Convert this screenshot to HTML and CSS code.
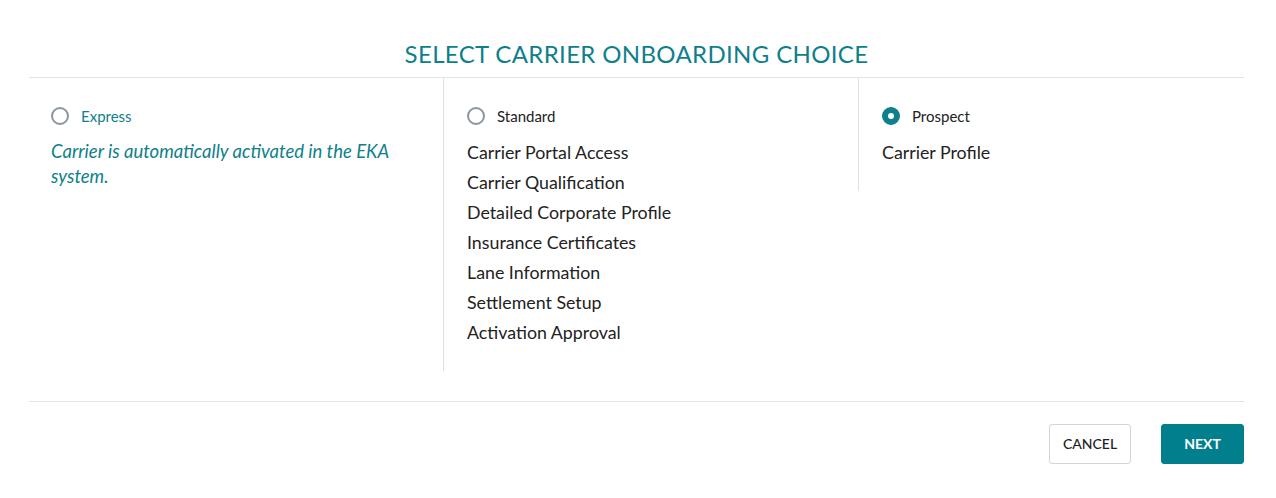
FILE: index.html
```html
<!DOCTYPE html>
<html>
<head>
<meta charset="utf-8">
<link rel="stylesheet" href="styles.css">
</head>
<body>
<div class="dialog">
  <h1 class="title">SELECT CARRIER ONBOARDING CHOICE</h1>
  <div class="choices">
    <div class="choice choice-first">
      <label class="radio-row"><span class="radio"></span><span class="radio-label teal">Express</span></label>
      <p class="desc">Carrier is automatically activated in the EKA system.</p>
    </div>
    <div class="choice">
      <label class="radio-row"><span class="radio"></span><span class="radio-label">Standard</span></label>
      <ul class="steps">
        <li>Carrier Portal Access</li>
        <li>Carrier Qualification</li>
        <li>Detailed Corporate Profile</li>
        <li>Insurance Certificates</li>
        <li>Lane Information</li>
        <li>Settlement Setup</li>
        <li>Activation Approval</li>
      </ul>
    </div>
    <div class="choice">
      <label class="radio-row"><span class="radio checked"></span><span class="radio-label">Prospect</span></label>
      <ul class="steps">
        <li>Carrier Profile</li>
      </ul>
    </div>
  </div>
  <div class="footer">
    <button class="btn btn-cancel">CANCEL</button>
    <button class="btn btn-next">NEXT</button>
  </div>
</div>
</body>
</html>
```

FILE: styles.css
```css
html, body {
  margin: 0;
  padding: 0;
  background: #fff;
  font-family: Lato, "Open Sans", sans-serif;
  color: #222;
}
.dialog {
  padding: 0 32px 0 29px;
}
.title {
  margin: 0;
  padding: 39px 0 8px;
  line-height: 30px;
  font-size: 24px;
  font-weight: 400;
  letter-spacing: 0.35px;
  color: #0e7f8b;
  text-align: center;
  border-bottom: 1px solid #e3e3e3;
}
.choices {
  display: grid;
  grid-template-columns: 414px 415px 1fr;
  align-items: start;
}
.choice {
  padding: 28px 20px 24px 23px;
  border-left: 1px solid #e0e0e0;
}
.choice-first {
  border-left: none;
  padding-left: 22px;
}
.radio-row {
  display: flex;
  align-items: center;
  height: 20px;
}
.radio {
  box-sizing: border-box;
  width: 18px;
  height: 18px;
  border: 2px solid #8b969f;
  border-radius: 50%;
  margin-right: 12px;
  flex: none;
}
.radio.checked {
  border: 6px solid #0e7f8b;
  background: #fff;
}
.radio-label {
  font-size: 15px;
  color: #222;
}
.teal {
  color: #0e7f8b;
}
.desc {
  margin: 13px 0 0;
  font-size: 18.5px;
  line-height: 25px;
  font-style: italic;
  color: #0e7f8b;
}
.steps {
  list-style: none;
  margin: 11px 0 0;
  padding: 0;
}
.steps li {
  font-size: 17.8px;
  line-height: 30px;
  color: #222;
}
.footer {
  margin-top: 30px;
  border-top: 1px solid #e3e3e3;
  padding-top: 22px;
  display: flex;
  justify-content: flex-end;
  gap: 30px;
}
.btn {
  height: 40px;
  font-family: Lato, "Open Sans", sans-serif;
  font-size: 14px;
  border-radius: 3px;
  cursor: pointer;
  padding: 0 0 2px;
}
.btn-cancel {
  width: 82px;
  background: #fff;
  border: 1px solid #d4d4d4;
  color: #222;
  font-weight: 500;
}
.btn-next {
  width: 83px;
  background: #027f8c;
  border: 1px solid #027f8c;
  color: #fff;
  font-weight: 700;
}
```
